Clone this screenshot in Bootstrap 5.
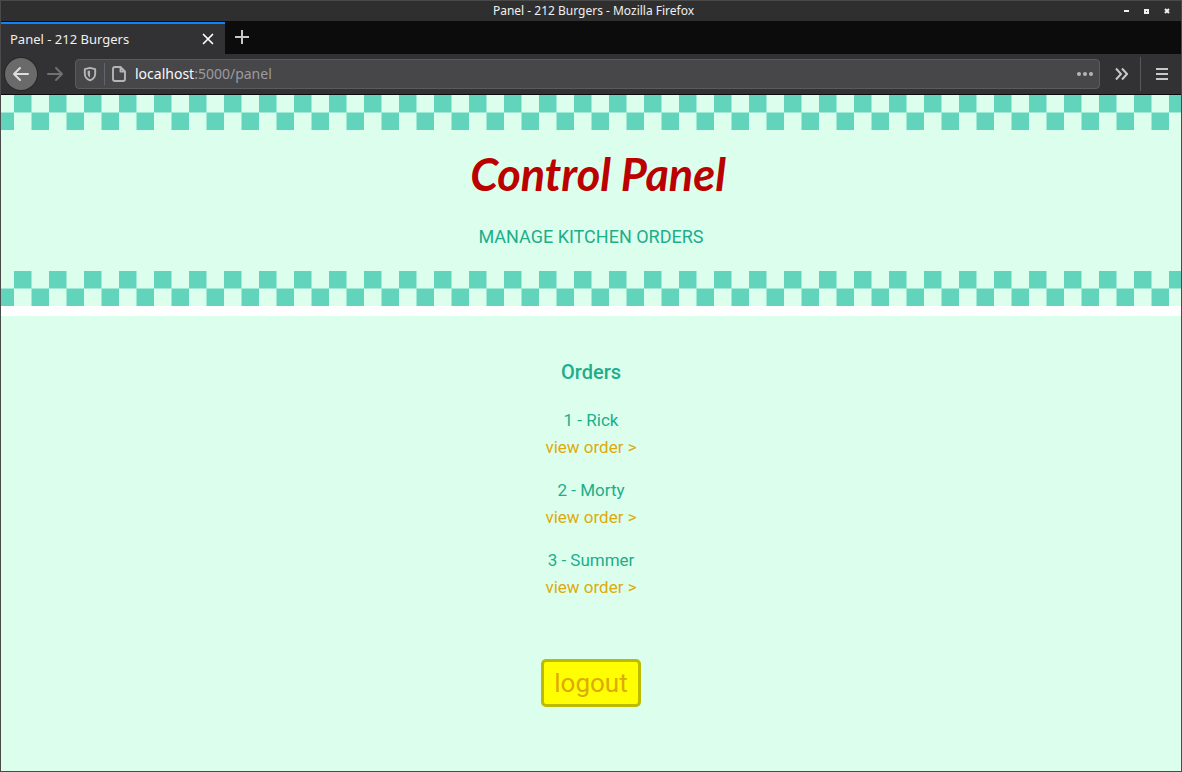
<!DOCTYPE html>
<html lang="en">
<head>
<meta charset="utf-8">
<meta name="viewport" content="width=device-width, initial-scale=1">
<title>Panel - 212 Burgers</title>
<link href="https://cdn.jsdelivr.net/npm/bootstrap@5.3.0/dist/css/bootstrap.min.css" rel="stylesheet">
<style>
  :root { --mint: #dcffed; --teal: #61d4bb; --teal-soft: #9fead4; --ink: #20ad8a; --gold: #ddaa0b; }
  body { font-family: Roboto, "Liberation Sans", sans-serif; }
  button { padding: 0; border: 0; background: none; color: inherit; }
  .window { border: 1px solid #4a4a4a; background: #fff; }
  .chrome { font-family: "Noto Sans", "Open Sans", sans-serif; font-size: 12px; line-height: 20px; color: #f0f0f0; background: #323234; }
  .titlebar { height: 21px; padding-left: 14px; background: #2f2f2f; border-bottom: 1px solid #0c0c0d; }
  .window-buttons { gap: 10px; padding-right: 9px; }
  .window-buttons button, .window-buttons svg { display: block; width: 10px; height: 10px; }
  .tabstrip { height: 32px; background: #0c0c0d; }
  .browser-tab { width: 224px; border-top: 2px solid #0a84ff; background: #323234; padding: 0 10px 0 9px; font-size: 13px; }
  .new-tab { margin-left: 9px; padding-bottom: 2px; }
  .chrome svg { display: block; }
  .toolbar { height: 41px; border-bottom: 1px solid #0c0c0d; padding: 0 13px 0 4px; }
  .back-button { width: 32px; height: 32px; border-radius: 50%; background: #6a6a6b; color: #dedede; box-shadow: 0 0 0 1px #282829; }
  .forward-button { width: 36px; height: 32px; color: #717172; margin-right: 2px; }
  .address { height: 30px; border: 1px solid #5b5b5d; border-radius: 4px; background: #474749; font-size: 14px; color: #b5b5b7; padding: 0 6px; }
  .address .divider { width: 1px; height: 22px; background: #606570; margin: 0 6px; }
  .address a { color: #9b9b9e; text-decoration: none; margin-left: 8px; }
  .address a span { color: #f9f9fa; }
  .more-tools { margin-left: 15px; }
  .tool-divider { width: 1px; height: 34px; background: #59595b; margin: 0 15px 0 12px; }
  .checkers { height: 35px; background-color: var(--mint);
    background-image:
      linear-gradient(90deg, var(--teal) 0 17px, var(--teal-soft) 17px 18px, var(--mint) 18px 35px),
      linear-gradient(var(--teal-soft), var(--teal-soft)),
      linear-gradient(90deg, var(--mint) 0 17px, var(--teal-soft) 17px 18px, var(--teal) 18px 35px);
    background-size: 35px 17px, 35px 1px, 35px 17px;
    background-position: 13px 0, 13px 17px, 13px 18px;
    background-repeat: repeat-x; }
  .banner, .orders { background: var(--mint); color: var(--ink); text-align: center; }
  .banner { margin-bottom: 10px; }
  .banner-text { height: 141px; padding-top: 14px; }
  .banner h1 { margin: 0 0 18px; padding-left: 14px; font-family: Lato, "Liberation Sans", sans-serif; font-style: italic; font-weight: 700; font-size: 45px; line-height: 60px; color: #bb0000; }
  .banner p { margin: 0; font-size: 18px; line-height: 30px; }
  .orders { padding: 43px 16px 64px; font-size: 17px; line-height: 27px; }
  .orders h2 { margin: 0 0 21px; font-size: 20px; font-weight: 500; line-height: 27px; }
  .orders li { margin-bottom: 16px; }
  .orders a { color: var(--gold); text-decoration: none; }
  .logout { margin-top: 42px; padding: 0 10px; height: 48px; border: 3px solid #bbbb00; border-radius: 5px; background: #ffff00; color: var(--gold); font-size: 26px; line-height: 40px; }
</style>
</head>
<body>
<div class="window min-vh-100 d-flex flex-column">
  <header class="chrome">
    <div class="titlebar row g-0 align-items-center">
      <div class="col"></div>
      <div class="col-auto">Panel - 212 Burgers - Mozilla Firefox</div>
      <div class="col d-flex justify-content-end window-buttons">
        <button aria-label="Minimize"><svg viewBox="0 0 10 10"><path d="M2 4h5v2H2z" fill="#f0f0f0"/></svg></button>
        <button aria-label="Maximize"><svg viewBox="0 0 10 10"><path d="M2 3h5v5H2zM4 5v1h1V5z" fill="#f0f0f0" fill-rule="evenodd"/></svg></button>
        <button aria-label="Close window"><svg viewBox="0 0 10 10"><path d="M3 3l4 4M7 3l-4 4" stroke="#f0f0f0" stroke-width="2"/></svg></button>
      </div>
    </div>
    <div class="tabstrip d-flex">
      <div class="browser-tab d-flex align-items-center justify-content-between">
        <span>Panel - 212 Burgers</span>
        <button aria-label="Close tab"><svg width="14" height="14" viewBox="0 0 14 14"><path d="M2.5 2.500l9 9M11.500 2.500l-9 9" stroke="#fff" stroke-width="1.700" fill="none" stroke-linecap="round"/></svg></button>
      </div>
      <button class="new-tab" aria-label="New tab"><svg width="16" height="16" viewBox="0 0 16 16"><path d="M8 1v14M1 8h14" stroke="#c8c8c9" stroke-width="2"/></svg></button>
    </div>
    <nav class="toolbar d-flex align-items-center">
      <button class="back-button d-flex align-items-center justify-content-center" aria-label="Back"><svg width="18" height="16" viewBox="0 0 18 16"><path d="M8 2L2 8l6 6M2 8h14" stroke="currentColor" stroke-width="2" fill="none" stroke-linecap="round" stroke-linejoin="round"/></svg></button>
      <button class="forward-button d-flex align-items-center justify-content-center" aria-label="Forward"><svg width="18" height="16" viewBox="0 0 18 16"><path d="M10 2l6 6-6 6M16 8H2" stroke="currentColor" stroke-width="2" fill="none" stroke-linecap="round" stroke-linejoin="round"/></svg></button>
      <div class="address d-flex flex-grow-1 align-items-center">
        <svg width="16" height="16" viewBox="0 0 16 16"><path d="M8 1.800l5.200 1.400v4.300c0 3.300-1.900 5.700-5.200 6.900-3.300-1.200-5.200-3.600-5.200-6.900V3.200z" fill="none" stroke="currentColor" stroke-width="1.900" stroke-linejoin="round"/><path d="M8 4.500v7C6.400 10.500 5.600 9.200 5.600 7.500V5.100z" fill="currentColor"/></svg>
        <span class="divider"></span>
        <svg width="16" height="18" viewBox="0 0 16 18"><path d="M4 2h5.500L14 6.500V14a2 2 0 0 1-2 2H4a2 2 0 0 1-2-2V4a2 2 0 0 1 2-2zM9.500 2v4.500H14" fill="none" stroke="currentColor" stroke-width="1.900" stroke-linejoin="round"/></svg>
        <a href="#"><span>localhost</span>:5000/panel</a>
        <button class="ms-auto" aria-label="Page actions"><svg width="16" height="6" viewBox="0 0 16 6"><g fill="currentColor"><circle cx="2" cy="3" r="2"/><circle cx="8" cy="3" r="2"/><circle cx="14" cy="3" r="2"/></g></svg></button>
      </div>
      <button class="more-tools" aria-label="More tools"><svg width="13" height="14" viewBox="0 0 13 14"><path d="M1 1.500L6 7l-5 5.500M7 1.500L12 7l-5 5.500" stroke="#c8c8c9" stroke-width="2" fill="none"/></svg></button>
      <span class="tool-divider"></span>
      <button aria-label="Menu"><svg width="12" height="12" viewBox="0 0 12 12"><path d="M0 1h12M0 6h12M0 11h12" stroke="#c8c8c9" stroke-width="2"/></svg></button>
    </nav>
  </header>
  <section class="banner">
    <div class="checkers"></div>
    <div class="banner-text">
      <h1>Control Panel</h1>
      <p>MANAGE KITCHEN ORDERS</p>
    </div>
    <div class="checkers"></div>
  </section>
  <main class="orders flex-grow-1">
    <h2>Orders</h2>
    <ul class="list-unstyled mb-0">
      <li><div>1 - Rick</div><a href="#">view order &gt;</a></li>
      <li><div>2 - Morty</div><a href="#">view order &gt;</a></li>
      <li><div>3 - Summer</div><a href="#">view order &gt;</a></li>
    </ul>
    <button class="logout">logout</button>
  </main>
</div>
<script src="https://cdn.jsdelivr.net/npm/bootstrap@5.3.0/dist/js/bootstrap.bundle.min.js"></script>
</body>
</html>
